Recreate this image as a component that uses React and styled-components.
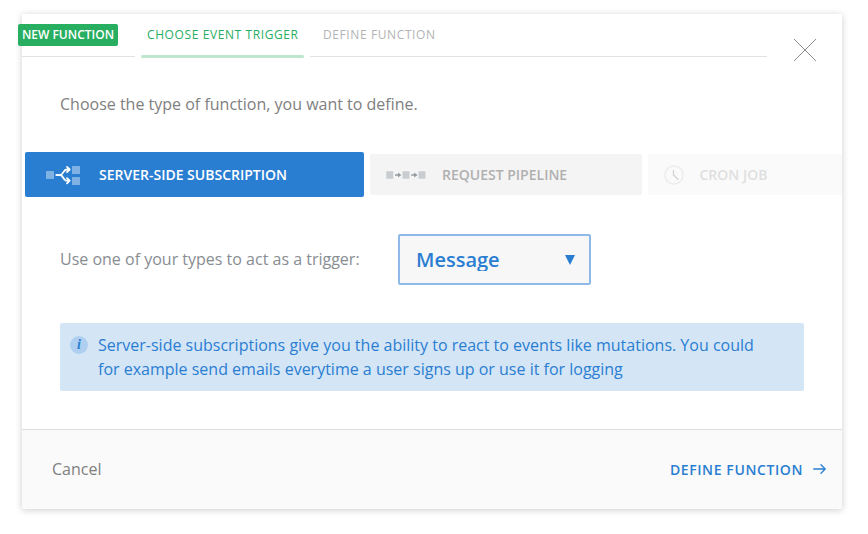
import React from 'react';
import styled, { createGlobalStyle, css } from 'styled-components';

const GlobalStyle = createGlobalStyle`
  *, *::before, *::after { box-sizing: border-box; }
  body {
    margin: 0;
    background: #fff;
    font-family: "Open Sans", "Noto Sans", sans-serif;
    -webkit-font-smoothing: antialiased;
  }
  button { font: inherit; border: 0; background: none; padding: 0; margin: 0; }
`;

const Page = styled.main`
  width: 868px;
  height: 534px;
  padding: 14px 26px 25px 22px;
  overflow: hidden;
`;

const Modal = styled.section`
  display: flex;
  flex-direction: column;
  width: 820px;
  height: 495px;
  background: #fff;
  box-shadow: 0 1px 7px rgba(0, 0, 0, 0.2);
`;

const Header = styled.header`
  display: flex;
  justify-content: space-between;
  height: 44px;
  padding-right: 25px;
`;

const Tabs = styled.nav`
  display: flex;
  gap: 6px;
`;

const tabStates = {
  badge: css`
    width: 113px;
    border-bottom: 1px solid #e2e2e2;
  `,
  active: css`
    width: 163px;
    padding-left: 6px;
    color: #27ae60;
  `,
  idle: css`
    width: 457px;
    padding-left: 13px;
    color: #b3b3b3;
    border-bottom: 1px solid #e2e2e2;
  `,
};

const Tab = styled.div`
  height: 43px;
  padding-top: 10px;
  font-size: 12px;
  font-weight: ${(p) => p.$weight || 500};
  line-height: 22px;
  letter-spacing: ${(p) => p.$spacing || '0.6px'};
  white-space: nowrap;
  ${(p) => tabStates[p.$state]}
`;

const ActiveBar = styled.div`
  width: 163px;
  height: 3px;
  margin: 9px 0 0 -6px;
  border-radius: 2px;
  background: #bee7cf;
`;

const Badge = styled.div`
  width: 100px;
  height: 22px;
  margin-left: -4px;
  border-radius: 2px;
  background: #27ae60;
  color: #fff;
  text-align: center;
`;

const CloseButton = styled.button`
  width: 24px;
  height: 24px;
  margin-top: 24px;
  svg { display: block; }
`;

const Intro = styled.p`
  margin: 34px 0 0 38px;
  font-size: 16px;
  line-height: 24px;
  color: #808080;
`;

const Types = styled.div`
  display: flex;
  align-items: center;
  gap: 6px;
  height: 45px;
  margin-top: 36px;
  padding-left: 3px;
  overflow: hidden;
`;

const TypeCard = styled.button`
  display: flex;
  align-items: center;
  flex: none;
  width: ${(p) => p.$width}px;
  height: ${(p) => (p.$active ? 45 : 41)}px;
  padding-left: ${(p) => p.$inset}px;
  border-radius: 2px;
  background: ${(p) => (p.$active ? '#2a7ed2' : '#f4f4f4')};
  color: ${(p) => (p.$active ? '#fff' : '#b0b0b0')};
  opacity: ${(p) => (p.$faded ? 0.4 : 1)};
  font-size: 14px;
  font-weight: 600;
  white-space: nowrap;
`;

const TypeIcon = styled.span`
  display: flex;
  width: ${(p) => p.$width}px;
`;

const TriggerRow = styled.div`
  display: flex;
  align-items: center;
  height: 51px;
  margin: 37px 0 0 38px;
  font-size: 16px;
  color: #888d92;
`;

const TriggerLabel = styled.label`
  width: 338px;
  padding-bottom: 2px;
`;

const Select = styled.button`
  display: flex;
  align-items: center;
  justify-content: space-between;
  width: 193px;
  height: 51px;
  padding: 0 14px 0 16px;
  border: 2px solid #8fb9e6;
  border-radius: 2px;
  background: #f7f7f7;
  color: #2a7ed2;
`;

const SelectValue = styled.span`
  height: 22px;
  overflow: hidden;
  font-size: 20px;
  font-weight: 600;
  line-height: 22px;
`;

const Notice = styled.aside`
  display: flex;
  width: 744px;
  height: 68px;
  margin: 38px 0 0 38px;
  padding: 10px;
  border-radius: 2px;
  background: #d4e5f6;
  color: #2a7ed2;
  font-size: 16px;
  line-height: 24px;
`;

const InfoMark = styled.span`
  flex: none;
  width: 18px;
  height: 18px;
  margin: 3px 10px 0 0;
  border-radius: 50%;
  background: #aecfef;
  font: italic bold 14px/18px "Liberation Serif", serif;
  text-align: center;
`;

const Footer = styled.footer`
  display: flex;
  align-items: center;
  justify-content: space-between;
  height: 80px;
  margin-top: auto;
  padding: 0 16px 0 30px;
  border-top: 1px solid #dedede;
  background: #fafafa;
`;

const Cancel = styled.button`
  padding-bottom: 2px;
  font-size: 16px;
  color: #808080;
`;

const Next = styled.button`
  display: flex;
  align-items: center;
  gap: 10px;
  font-size: 14px;
  font-weight: 600;
  letter-spacing: 0.6px;
  color: #2a7ed2;
  svg { margin-bottom: 1px; }
`;

const SubscriptionIcon = () => (
  <svg width="35" height="20" viewBox="0 0 35 20" fill="none">
    <g fill="#fff" fillOpacity=".4">
      <rect x="0" y="6" width="8" height="8" rx=".5" />
      <rect x="26" y="1" width="8" height="8" rx=".5" />
      <rect x="26" y="12" width="8" height="8" rx=".5" />
    </g>
    <path
      d="M10.3 10H14M23.2 4.500h-2.200c-4 0-3.500 5.500-7 5.500 3.500 0 3 5.700 7 5.700h2.200M21 1.900l2.700 2.600L21 7.100M21 13.100l2.700 2.600-2.700 2.600"
      stroke="#fff" strokeWidth="1.8" strokeLinecap="round" strokeLinejoin="round"
    />
  </svg>
);

const PipelineIcon = () => (
  <svg width="40" height="8" viewBox="0 0 40 8">
    <g fill="#c9ccd1">
      <rect x=".3" y=".3" width="7" height="7.4" rx=".5" />
      <rect x="16.5" y=".3" width="7" height="7.4" rx=".5" />
      <rect x="32.5" y=".3" width="7" height="7.4" rx=".5" />
    </g>
    <path
      d="M9 3.200h3V1.500L15.300 4 12 6.500V4.800H9zM25.200 3.200h3V1.500L31.500 4l-3.300 2.500V4.800h-3z"
      fill="#92999e"
    />
  </svg>
);

const ClockIcon = () => (
  <svg width="20" height="20" viewBox="0 0 20 20" fill="none">
    <circle cx="10" cy="10" r="9.1" stroke="#cfd1d4" strokeWidth="1.5" />
    <path d="M9.500 5v5l5 4.700" stroke="#8b9399" strokeWidth="1.3" />
  </svg>
);

export default function App() {
  return (
    <>
      <GlobalStyle />
      <Page>
        <Modal>
          <Header>
            <Tabs>
              <Tab $state="badge" $spacing="0px" $weight={600}>
                <Badge>NEW FUNCTION</Badge>
              </Tab>
              <Tab $state="active">
                CHOOSE EVENT TRIGGER
                <ActiveBar />
              </Tab>
              <Tab $state="idle">DEFINE FUNCTION</Tab>
            </Tabs>
            <CloseButton aria-label="Close">
              <svg width="24" height="24" viewBox="0 0 24 24">
                <path d="M1 1l22 22M23 1L1 23" stroke="#8c8c8c" strokeWidth="1" />
              </svg>
            </CloseButton>
          </Header>
          <Intro>Choose the type of function, you want to define.</Intro>
          <Types>
            <TypeCard $active $width={339} $inset={21}>
              <TypeIcon $width={53}><SubscriptionIcon /></TypeIcon>
              SERVER-SIDE SUBSCRIPTION
            </TypeCard>
            <TypeCard $width={272} $inset={16}>
              <TypeIcon $width={56}><PipelineIcon /></TypeIcon>
              REQUEST PIPELINE
            </TypeCard>
            <TypeCard $faded $width={230} $inset={16}>
              <TypeIcon $width={35.5}><ClockIcon /></TypeIcon>
              CRON JOB
            </TypeCard>
          </Types>
          <TriggerRow>
            <TriggerLabel>Use one of your types to act as a trigger:</TriggerLabel>
            <Select>
              <SelectValue>Message</SelectValue>
              <svg width="10" height="10" viewBox="0 0 10 10">
                <path d="M0 0h10L5 10z" fill="#2a7ed2" />
              </svg>
            </Select>
          </TriggerRow>
          <Notice>
            <InfoMark>i</InfoMark>
            <span>
              Server-side subscriptions give you the ability to react to events like mutations. You could
              <br />
              for example send emails everytime a user signs up or use it for logging
            </span>
          </Notice>
          <Footer>
            <Cancel>Cancel</Cancel>
            <Next>
              DEFINE FUNCTION
              <svg width="13" height="10" viewBox="0 0 13 10" fill="none">
                <path d="M.7 5h11.300M8 .8L12.200 5 8 9.200" stroke="#2a7ed2" strokeWidth="1.3" strokeLinecap="round" strokeLinejoin="round" />
              </svg>
            </Next>
          </Footer>
        </Modal>
      </Page>
    </>
  );
}
